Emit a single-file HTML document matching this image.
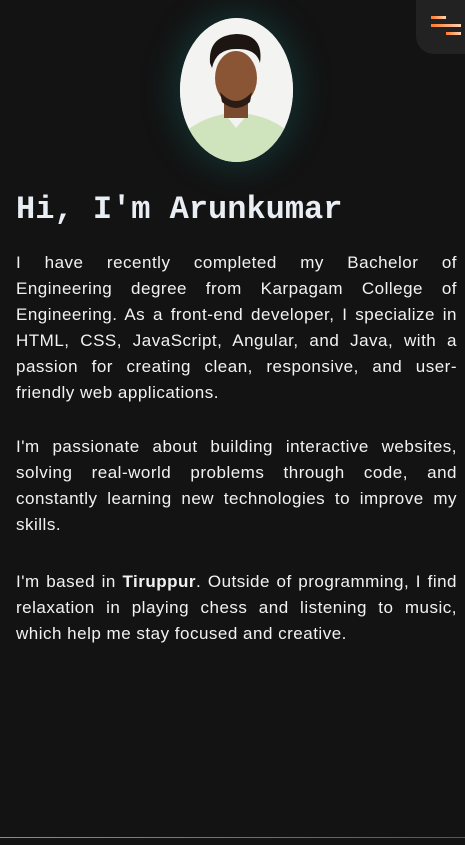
<!DOCTYPE html>
<html><head><meta charset="utf-8">
<style>
html,body{margin:0;padding:0;background:#131313;width:465px;height:845px;overflow:hidden;position:relative;font-family:"Liberation Sans",sans-serif;}
.menu{position:absolute;right:0;top:0;width:49px;height:54px;background:#222;border-bottom-left-radius:18px;}
.menu i{position:absolute;height:3px;background:linear-gradient(90deg,#ff7a2a,#ffd0b0);}
.av{position:absolute;left:180px;top:18px;width:113px;height:144px;border-radius:50%;background:#f4f4f2;overflow:hidden;box-shadow:0 0 30px 8px rgba(20,80,80,.45);}
h1{position:absolute;left:16px;top:191px;margin:0;font-family:"Liberation Mono","DejaVu Sans Mono",monospace;font-weight:bold;font-size:32px;color:#e8eef4;}
.t{position:absolute;left:16px;width:441px;color:#f2f2f2;font-size:17px;line-height:26px;letter-spacing:0.5px;}
.t span{display:block;text-align:justify;text-align-last:justify;white-space:nowrap;}
.t span.l{text-align-last:left;}
.line{position:absolute;left:0;top:837px;width:465px;height:1px;background:linear-gradient(90deg,#e8702a,#6e3f8a);}
</style></head><body>
<div class="menu"><i style="left:15px;top:16px;width:15px"></i><i style="left:15px;top:24px;width:30px"></i><i style="left:30px;top:32px;width:15px"></i></div>
<div class="av">
<svg width="113" height="144" viewBox="0 0 113 144">
<rect width="113" height="144" fill="#f3f3f1"/>
<path d="M0 118 Q20 100 45 96 L56 110 L68 96 Q95 100 113 118 L113 144 L0 144Z" fill="#cfe3bd"/>
<rect x="44" y="78" width="24" height="22" fill="#7a4a2e"/>
<ellipse cx="56" cy="60" rx="21" ry="27" fill="#8a5535"/>
<path d="M30 45 Q28 18 56 16 Q84 16 80 45 Q76 30 56 31 Q36 31 32 50Z" fill="#1c1512"/>
<path d="M40 74 Q56 92 72 74 L70 84 Q56 96 42 84Z" fill="#2a1c15"/>
</svg></div>
<h1>Hi, I'm Arunkumar</h1>
<div class="t" style="top:250px">
<span>I have recently completed my Bachelor of</span>
<span>Engineering degree from Karpagam College of</span>
<span>Engineering. As a front-end developer, I specialize in</span>
<span>HTML, CSS, JavaScript, Angular, and Java, with a</span>
<span>passion for creating clean, responsive, and user-</span>
<span class="l">friendly web applications.</span>
</div>
<div class="t" style="top:434px">
<span>I'm passionate about building interactive websites,</span>
<span>solving real-world problems through code, and</span>
<span>constantly learning new technologies to improve my</span>
<span class="l">skills.</span>
</div>
<div class="t" style="top:569px">
<span>I'm based in <b>Tiruppur</b>. Outside of programming, I find</span>
<span>relaxation in playing chess and listening to music,</span>
<span class="l">which help me stay focused and creative.</span>
</div>
<div class="line"></div>
</body></html>
